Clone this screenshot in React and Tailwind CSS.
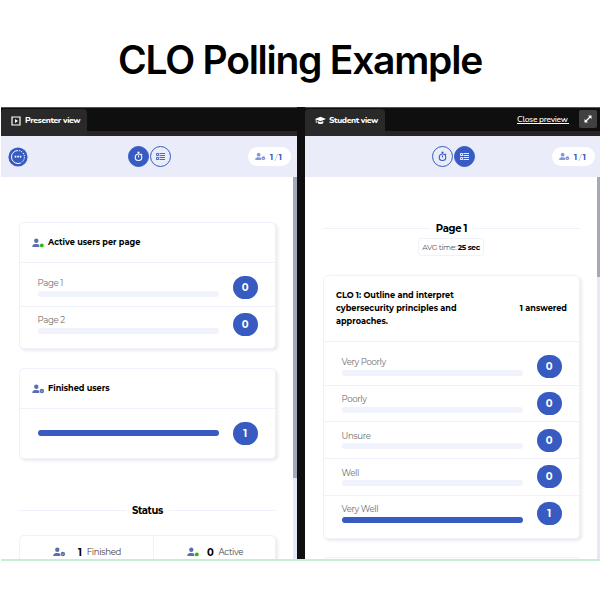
import React from "react";

function UserIcon({ kind, className = "h-[10px] w-[13px]", color = "#5b6fae" }) {
  return (
    <svg viewBox="0 0 13 10" className={"shrink-0 " + className}>
      <circle cx="4.3" cy="2.8" r="2.2" fill={color} />
      <path d="M0.3 9V8.2C0.5 6.5 2 5.9 4.3 5.9c1.4 0 2.4.3 3 .9V9Z" fill={color} />
      {kind === "active" ? (
        <circle cx="9.8" cy="7.4" r="1.9" fill="#2db80f" />
      ) : (
        <>
          <circle cx="9.9" cy="7" r="2.2" fill={color} />
          <path d="M8.9 7l.7.7 1.3-1.3" fill="none" stroke="#fff" strokeWidth=".5" />
        </>
      )}
    </svg>
  );
}

function Stopwatch() {
  return (
    <svg viewBox="0 0 12 12" className="size-[11px]" fill="none" stroke="currentColor" strokeWidth="1.2">
      <circle cx="6" cy="6.8" r="3.6" />
      <path d="M4.7 1.3h2.6M6 1.3v1.8M6 4.8v2.2M9 3.2l.9.9" />
    </svg>
  );
}

function ListIcon() {
  return (
    <svg viewBox="0 0 9 7" className="h-[7px] w-[9px]" fill="none" stroke="currentColor" strokeWidth=".9">
      <path d="M.5 .5h2v2h-2zM.5 4.5h2v2h-2zM3.5 .5h5.5M3.5 2.5h5.5M3.5 4.5h5.5M3.5 6.5h5.5" />
    </svg>
  );
}

function Toolbar({ active, menu }) {
  const on = "bg-[#375bc0] text-white";
  const off = "text-[#375bc0]";
  const base = "flex size-[21px] items-center justify-center rounded-full border border-[#375bc0] ";
  return (
    <div className={"grid h-[41px] shrink-0 grid-cols-[1fr_43px_1fr] items-center bg-[#eaecf9] " + (menu ? "pr-[6px] pl-[7px]" : "pr-[5px] pl-[3px]")}>
      <div>
        {menu && (
          <svg viewBox="0 0 20 20" className="size-5">
            <circle cx="10" cy="10" r="9.6" fill="#375bc0" />
            <circle cx="10" cy="10" r="6.5" fill="none" stroke="#fff" strokeWidth="1" />
            <path d="M10 3.5a6.5 6.5 0 0 1 6.5 6.5 6.5 6.5 0 0 1-3.5 5.8" fill="none" stroke="#375bc0" strokeWidth="1.4" strokeDasharray="1 1.3" />
            <path d="M6.7 9.6h1.6M9.2 9.6h1.6M11.7 9.6h1.6" stroke="#fff" strokeWidth="1.6" />
          </svg>
        )}
      </div>
      <div className={"flex justify-between " + (menu ? "" : "ml-[1.5px] w-[43.5px]")}>
        <span className={base + (active === "time" ? on : off)}><Stopwatch /></span>
        <span className={base + (active === "list" ? on : off)}><ListIcon /></span>
      </div>
      <div className="flex h-[19px] w-[43px] items-center justify-self-end rounded-full bg-white pl-[7px]">
        <UserIcon kind="done" color="#8598d8" className="h-[9px] w-[11px]" />
        <span className="ml-[4px] flex gap-[1.5px] text-[8px] whitespace-nowrap text-[#8fa2dc]">
          <b className="text-[#375bc0]">1</b>/<b className="text-[#375bc0]">1</b>
        </span>
      </div>
    </div>
  );
}

function Count({ value }) {
  return (
    <div className="flex h-[23px] w-[24.5px] items-center justify-center rounded-[12px] bg-[#375bc0] text-[10px] font-bold text-white">
      {value}
    </div>
  );
}

function Row({ label, value, className = "" }) {
  return (
    <div className={"flex h-[36.7px] items-center justify-between px-[17.5px] " + className}>
      <div className="w-[181px]">
        {label && <div className="mb-[2.5px] h-[11px] text-[8.6px] leading-[12px] tracking-[-0.35px] text-[#707070]">{label}</div>}
        <div className={"h-[6px] rounded-full " + (value ? "bg-[#375bc0]" : "bg-[#f0f3fb]") + (label ? " mb-px" : "")} />
      </div>
      <Count value={value} />
    </div>
  );
}

const card = "w-[257px] shrink-0 rounded-[5px] border border-[#eff1fb] bg-white shadow-[2px_2px_3px_rgba(60,60,90,0.10)] ";

function CardTitle({ kind, children }) {
  return (
    <div className="flex h-10 items-center border-b border-[#eff1fb] pb-px pl-[11.5px] text-[8.15px] font-bold text-black">
      <UserIcon kind={kind} className="mt-px mr-[3.5px] h-[10px] w-[13px]" />
      {children}
    </div>
  );
}

function Heading({ children }) {
  return (
    <div className="flex h-4 w-[257px] shrink-0 items-center text-[10px] font-bold tracking-[-0.35px] text-black">
      <i className="h-px flex-1 bg-[#eff1fb]" />
      <span className="w-[43px] text-center whitespace-nowrap">{children}</span>
      <i className="h-px flex-1 bg-[#eff1fb]" />
    </div>
  );
}

function Body({ children, thumb, bar }) {
  return (
    <div className="flex min-h-0 flex-1 overflow-hidden bg-white">
      <div className="flex min-w-0 flex-1 flex-col overflow-hidden pl-[18px]">{children}</div>
      <div className={"shrink-0 bg-[#e5e8f7] " + bar}>
        <div className={"bg-[#a4a8bc] " + thumb} />
      </div>
    </div>
  );
}

const tab = "flex h-[27px] items-center self-end rounded-t-[4px] bg-[#292929] pb-[4px] text-[8.5px] tracking-[-0.35px] font-extrabold text-white font-[Nunito,'Open_Sans',sans-serif] ";

export default function App() {
  return (
    <div className="flex h-[600px] w-[600px] flex-col overflow-hidden bg-white font-[Montserrat,Inter,sans-serif]">
      <h1 className="h-[107px] shrink-0 pt-[36px] text-center font-[Inter,sans-serif] text-[39px] leading-[48px] font-semibold tracking-[-1.25px] whitespace-nowrap text-black">
        CLO Polling Example
      </h1>
      <main className="ml-px flex h-[452px] shrink-0 gap-2 overflow-hidden bg-[#0f0f0f]">
        <section className="flex w-[296px] flex-col">
          <div className="flex h-[29px] shrink-0 border-t border-[#555] bg-[linear-gradient(#0f0f0f_23px,#292525_23px)]">
            <div className={tab + "w-[86px] pl-[10px]"}>
              <svg viewBox="0 0 10 10" className="mr-[4px] size-[10px]">
                <path d="M1 1h8v8H1z" fill="none" stroke="#fff" strokeWidth="1.2" />
                <path d="M4 3v4l3-2z" fill="#fff" />
              </svg>
              <span className="whitespace-nowrap">Presenter view</span>
            </div>
          </div>
          <Toolbar active="time" menu />
          <Body thumb="h-[301px]" bar="w-1">
            <div className={card + "mt-[45px] h-[127px]"}>
              <CardTitle kind="active">Active users per page</CardTitle>
              <Row label="Page 1" value={0} className="mt-[6px]" />
              <Row label="Page 2" value={0} className="border-t border-[#eff1fb]" />
            </div>
            <div className={card + "mt-[19px] h-[91px]"}>
              <CardTitle kind="done">Finished users</CardTitle>
              <Row value={1} className="mt-[6px]" />
            </div>
            <div className="mt-[43px]"><Heading>Status</Heading></div>
            <div className={card + "mt-[17px] flex h-10 text-[8.6px] tracking-[-0.3px] text-[#444]"}>
              <div className="flex h-8 w-[134px] items-center border-r border-[#eff1fb] pl-[33px]">
                <UserIcon kind="done" /><b className="mr-[5px] ml-[12px] text-[10px] text-black">1</b>Finished
              </div>
              <div className="flex h-8 items-center pl-[33px]">
                <UserIcon kind="active" /><b className="mr-[5px] ml-[7px] text-[10px] text-black">0</b>Active
              </div>
            </div>
          </Body>
        </section>
        <section className="flex w-[295px] flex-col">
          <div className="flex h-[29px] shrink-0 border-t border-[#555] bg-[linear-gradient(#0f0f0f_23px,#292525_23px)]">
            <div className={tab + "w-20 pl-[10px]"}>
              <svg viewBox="0 0 11 9" className="mr-[3px] h-[9px] w-[11px]" fill="#fff">
                <path d="M5.5.7L11 3 5.5 5.3 1.6 3.7v3.4H.8V3.4L0 3z" />
                <path d="M2.7 5v2c1.2 1.3 4.4 1.3 5.6 0V5L5.5 6.2z" />
              </svg>
              <span className="whitespace-nowrap">Student view</span>
            </div>
            <span className="mt-[6px] ml-[132px] h-[10px] w-[52px] border-b border-white font-[Nunito,'Open_Sans',sans-serif] text-[8.5px] leading-[10px] font-medium tracking-[-0.3px] whitespace-nowrap text-white">
              Close preview
            </span>
            <span className="mt-[2px] ml-[10px] flex size-[18px] items-center justify-center rounded-[2px] bg-[#414141]">
              <svg viewBox="0 0 10 10" className="size-[10px]" fill="#fff">
                <path d="M5 1.5h3.5v3.5zM1.5 5v3.5h3.5z" />
                <path d="M2.5 7.5l5-5" stroke="#fff" strokeWidth="1.3" />
              </svg>
            </span>
          </div>
          <Toolbar active="list" />
          <Body thumb="h-[100px]" bar="w-[3px]">
            <div className="mt-[43px]"><Heading>Page 1</Heading></div>
            <div className="mt-[2px] ml-[95px] flex h-[18px] w-[66px] shrink-0 items-center justify-center rounded-[3px] border border-[#eff1fb] pt-px text-[7.5px] tracking-[-0.35px] whitespace-nowrap text-[#555]">
              <span>AVG time: <b className="text-black">25 sec</b></span>
            </div>
            <div className={card + "mt-[19px] h-[264px]"}>
              <div className="flex h-[66px] items-center justify-between border-b border-[#eff1fb] px-3 pb-px text-[8.15px] leading-[13px] font-bold text-black">
                <p className="whitespace-nowrap">CLO 1: Outline and interpret<br />cybersecurity principles and<br />approaches.</p>
                <span className="whitespace-nowrap">1 answered</span>
              </div>
              <Row label="Very Poorly" value={0} className="mt-[6px]" />
              <Row label="Poorly" value={0} className="border-t border-[#eff1fb]" />
              <Row label="Unsure" value={0} className="border-t border-[#eff1fb]" />
              <Row label="Well" value={0} className="border-t border-[#eff1fb]" />
              <Row label="Very Well" value={1} className="border-t border-[#eff1fb]" />
            </div>
            <div className={card + "mt-[18px] h-10"} />
          </Body>
        </section>
      </main>
      <div className="ml-px h-[2px] shrink-0 bg-[#c3efd2]" />
    </div>
  );
}
